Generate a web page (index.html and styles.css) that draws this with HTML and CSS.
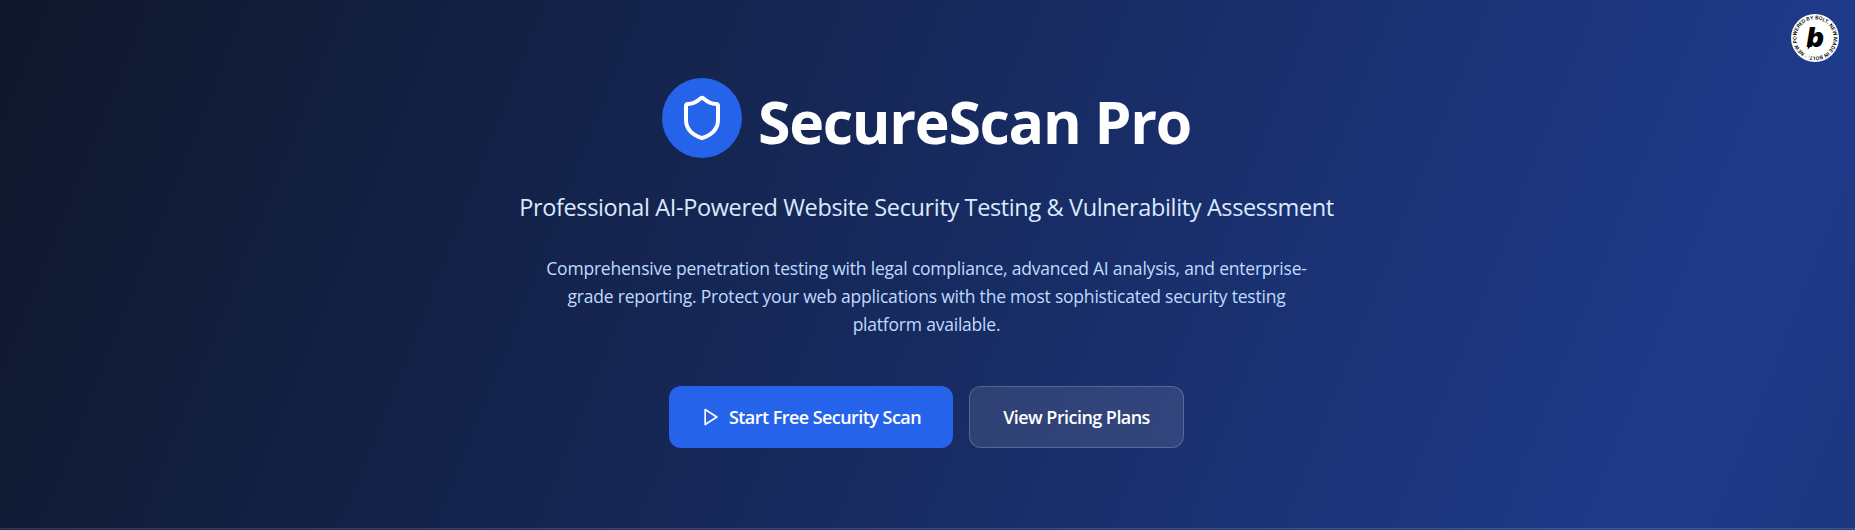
FILE: index.html
```
<!DOCTYPE html>
<html lang="en">
<head>
  <meta charset="UTF-8">
  <meta name="viewport" content="width=device-width, initial-scale=1">
  <title>SecureScan Pro</title>
  <link rel="stylesheet" href="styles.css">
</head>
<body>

  <div class="page">
    <a class="bolt-badge" href="#" aria-label="Powered by Bolt">
      <svg viewBox="0 0 48 48" width="48" height="48">
        <defs>
          <path id="ring" d="M24 42.6 A18.6 18.6 0 1 1 24.01 42.6" />
        </defs>
        <circle cx="24" cy="24" r="24" fill="#fff" />
        <text class="ring-text" transform="rotate(25 24 24)"><textPath href="#ring" textLength="115">· NEW POWERED BY BOLT. NEW MADE IN BOLT.</textPath></text>
        <text class="ring-logo" x="15.5" y="32.5">b</text>
        <path d="M17 29.5h5l-5.2 6z" />
      </svg>
    </a>

    <header class="hero">
      <div class="brand">
        <div class="brand-icon">
          <svg viewBox="0 0 24 24" width="48" height="48" fill="none" stroke="currentColor" stroke-width="2" stroke-linecap="round" stroke-linejoin="round">
            <path d="M20 13c0 5-3.5 7.5-7.66 8.95a1 1 0 0 1-.67-.01C7.5 20.5 4 18 4 13V6a1 1 0 0 1 1-1c2 0 4.5-1.2 6.24-2.72a1.17 1.17 0 0 1 1.52 0C14.51 3.81 17 5 19 5a1 1 0 0 1 1 1z" />
          </svg>
        </div>
        <h1>SecureScan Pro</h1>
      </div>

      <p class="tagline">Professional AI-Powered Website Security Testing &amp; Vulnerability Assessment</p>

      <p class="description">Comprehensive penetration testing with legal compliance, advanced AI analysis, and enterprise-<br>grade reporting. Protect your web applications with the most sophisticated security testing<br>platform available.</p>

      <div class="actions">
        <button class="btn btn-primary">
          <svg viewBox="0 0 24 24" width="20" height="20" fill="none" stroke="currentColor" stroke-width="2" stroke-linecap="round" stroke-linejoin="round">
            <polygon points="5 3 19 12 5 21 5 3" />
          </svg>
          <span>Start Free Security Scan</span>
        </button>
        <button class="btn btn-secondary">View Pricing Plans</button>
      </div>
    </header>

    <section class="features"></section>
  </div>

</body>
</html>
```
FILE: styles.css
```
* {
  box-sizing: border-box;
}

body {
  margin: 0;
  font-family: 'Segoe UI', 'Open Sans', 'Noto Sans', sans-serif;
  color: #fff;
}

.page {
  position: relative;
  display: flex;
  flex-direction: column;
  height: 100vh;
  overflow: hidden;
  background: linear-gradient(to bottom right, #0f172a, #1e3a8a, #0f172a) 0 0 / 100% 4700px no-repeat;
}

h1,
p {
  margin: 0;
}

.hero {
  display: flex;
  flex-direction: column;
  flex-shrink: 0;
  align-items: center;
  height: 528px;
  padding: 78px 2px 80px 0;
  text-align: center;
}

.brand {
  display: flex;
  align-items: center;
  gap: 16px;
  margin-bottom: 33px;
}

.brand-icon {
  display: flex;
  padding: 16px;
  border-radius: 50%;
  background: #2563eb;
}

h1 {
  padding-top: 5px;
  font-size: 59px;
  font-weight: 700;
  line-height: 60px;
  letter-spacing: -1.3px;
  white-space: nowrap;
}

.tagline {
  margin-bottom: 31px;
  font-size: 23.5px;
  line-height: 32px;
  letter-spacing: -0.37px;
  color: #dbeafe;
  white-space: nowrap;
}

.description {
  margin-bottom: 48px;
  font-size: 17.5px;
  line-height: 28px;
  letter-spacing: -0.21px;
  color: #bfdbfe;
  white-space: nowrap;
}

/* Buttons */
.actions {
  display: flex;
  gap: 16px;
}

.btn {
  display: flex;
  align-items: center;
  justify-content: center;
  gap: 8px;
  height: 62px;
  border: none;
  border-radius: 12px;
  font-family: inherit;
  font-size: 18px;
  font-weight: 600;
  line-height: 28px;
  letter-spacing: -0.55px;
  color: #fff;
  white-space: nowrap;
  cursor: pointer;
}

.btn-primary {
  width: 284px;
  background: #2563eb;
}

.btn-secondary {
  width: 215px;
  border: 1px solid rgba(255, 255, 255, 0.2);
  background: rgba(255, 255, 255, 0.1);
}

.features {
  flex: 1;
  border-top: 1px solid rgba(255, 255, 255, 0.1);
  background: rgba(255, 255, 255, 0.05);
}

/* Round badge in the corner */
.bolt-badge {
  position: absolute;
  top: 14px;
  right: 16px;
  width: 48px;
  height: 48px;
}

.bolt-badge svg {
  display: block;
}

.ring-text {
  font-family: 'Inter', sans-serif;
  font-size: 5px;
  font-weight: 600;
  fill: #000;
}

.ring-logo {
  font-family: 'Inter', sans-serif;
  font-size: 27px;
  font-style: italic;
  font-weight: 900;
  fill: #000;
}
```
